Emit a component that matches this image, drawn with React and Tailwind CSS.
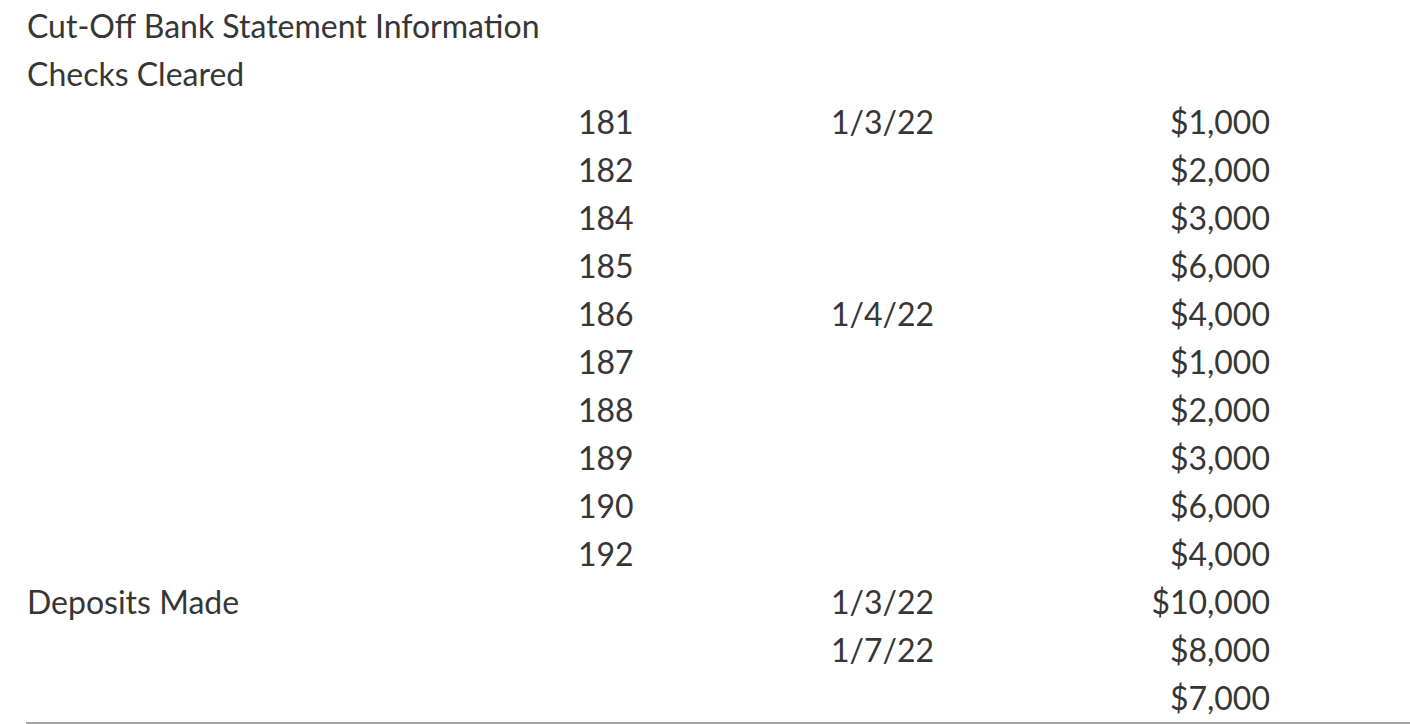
const rows = [
  ["Cut-Off Bank Statement Information", "", "", ""],
  ["Checks Cleared", "", "", ""],
  ["", "181", "1/3/22", "$1,000"],
  ["", "182", "", "$2,000"],
  ["", "184", "", "$3,000"],
  ["", "185", "", "$6,000"],
  ["", "186", "1/4/22", "$4,000"],
  ["", "187", "", "$1,000"],
  ["", "188", "", "$2,000"],
  ["", "189", "", "$3,000"],
  ["", "190", "", "$6,000"],
  ["", "192", "", "$4,000"],
  ["Deposits Made", "", "1/3/22", "$10,000"],
  ["", "", "1/7/22", "$8,000"],
  ["", "", "", "$7,000"],
];

export default function App() {
  return (
    <div className="w-[1410px] h-[724px] bg-white overflow-hidden" style={{ fontFamily: "Lato, 'Open Sans', sans-serif" }}>
      <div className="ml-[26px] pt-[2px] border-b-2 border-[#a5a5a5] text-[32px] leading-[48px] text-[#363636]">
        {rows.map((r, i) => (
          <div key={i} className="flex h-[48px] whitespace-nowrap">
            <div className="w-[552px] pl-[1px]">{r[0]}</div>
            <div className="w-[254px] -ml-[1px] pl-[1px]">{r[1]}</div>
            <div className="w-[150px]">{r[2]}</div>
            <div className="w-[289px] text-right">{r[3]}</div>
          </div>
        ))}
      </div>
    </div>
  );
}
